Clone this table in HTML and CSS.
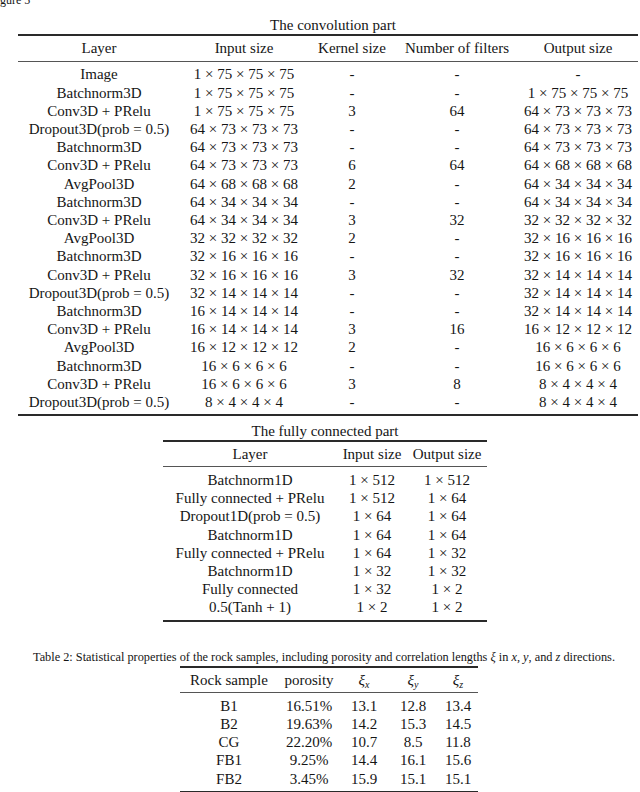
FILE: index.html
```html
<!DOCTYPE html>
<html>
<head>
<meta charset="utf-8">
<link rel="stylesheet" href="styles.css">
</head>
<body>
<div class="fig">gure 5</div>

<section class="tbl conv">
  <div class="title">The convolution part</div>
  <div class="rule thick"></div>
  <div class="head">
    <div class="row"><span>Layer</span><span>Input size</span><span>Kernel size</span><span>Number of filters</span><span>Output size</span></div>
  </div>
  <div class="rule thin"></div>
  <div class="body">
    <div class="row"><span>Image</span><span>1 × 75 × 75 × 75</span><span>-</span><span>-</span><span>-</span></div>
    <div class="row"><span>Batchnorm3D</span><span>1 × 75 × 75 × 75</span><span>-</span><span>-</span><span>1 × 75 × 75 × 75</span></div>
    <div class="row"><span>Conv3D + PRelu</span><span>1 × 75 × 75 × 75</span><span>3</span><span>64</span><span>64 × 73 × 73 × 73</span></div>
    <div class="row"><span>Dropout3D(prob = 0.5)</span><span>64 × 73 × 73 × 73</span><span>-</span><span>-</span><span>64 × 73 × 73 × 73</span></div>
    <div class="row"><span>Batchnorm3D</span><span>64 × 73 × 73 × 73</span><span>-</span><span>-</span><span>64 × 73 × 73 × 73</span></div>
    <div class="row"><span>Conv3D + PRelu</span><span>64 × 73 × 73 × 73</span><span>6</span><span>64</span><span>64 × 68 × 68 × 68</span></div>
    <div class="row"><span>AvgPool3D</span><span>64 × 68 × 68 × 68</span><span>2</span><span>-</span><span>64 × 34 × 34 × 34</span></div>
    <div class="row"><span>Batchnorm3D</span><span>64 × 34 × 34 × 34</span><span>-</span><span>-</span><span>64 × 34 × 34 × 34</span></div>
    <div class="row"><span>Conv3D + PRelu</span><span>64 × 34 × 34 × 34</span><span>3</span><span>32</span><span>32 × 32 × 32 × 32</span></div>
    <div class="row"><span>AvgPool3D</span><span>32 × 32 × 32 × 32</span><span>2</span><span>-</span><span>32 × 16 × 16 × 16</span></div>
    <div class="row"><span>Batchnorm3D</span><span>32 × 16 × 16 × 16</span><span>-</span><span>-</span><span>32 × 16 × 16 × 16</span></div>
    <div class="row"><span>Conv3D + PRelu</span><span>32 × 16 × 16 × 16</span><span>3</span><span>32</span><span>32 × 14 × 14 × 14</span></div>
    <div class="row"><span>Dropout3D(prob = 0.5)</span><span>32 × 14 × 14 × 14</span><span>-</span><span>-</span><span>32 × 14 × 14 × 14</span></div>
    <div class="row"><span>Batchnorm3D</span><span>16 × 14 × 14 × 14</span><span>-</span><span>-</span><span>32 × 14 × 14 × 14</span></div>
    <div class="row"><span>Conv3D + PRelu</span><span>16 × 14 × 14 × 14</span><span>3</span><span>16</span><span>16 × 12 × 12 × 12</span></div>
    <div class="row"><span>AvgPool3D</span><span>16 × 12 × 12 × 12</span><span>2</span><span>-</span><span>16 × 6 × 6 × 6</span></div>
    <div class="row"><span>Batchnorm3D</span><span>16 × 6 × 6 × 6</span><span>-</span><span>-</span><span>16 × 6 × 6 × 6</span></div>
    <div class="row"><span>Conv3D + PRelu</span><span>16 × 6 × 6 × 6</span><span>3</span><span>8</span><span>8 × 4 × 4 × 4</span></div>
    <div class="row"><span>Dropout3D(prob = 0.5)</span><span>8 × 4 × 4 × 4</span><span>-</span><span>-</span><span>8 × 4 × 4 × 4</span></div>
  </div>
  <div class="rule thick"></div>
</section>

<section class="tbl fc">
  <div class="title">The fully connected part</div>
  <div class="rule thick"></div>
  <div class="head">
    <div class="row"><span>Layer</span><span>Input size</span><span>Output size</span></div>
  </div>
  <div class="rule thin"></div>
  <div class="body">
    <div class="row"><span>Batchnorm1D</span><span>1 × 512</span><span>1 × 512</span></div>
    <div class="row"><span>Fully connected + PRelu</span><span>1 × 512</span><span>1 × 64</span></div>
    <div class="row"><span>Dropout1D(prob = 0.5)</span><span>1 × 64</span><span>1 × 64</span></div>
    <div class="row"><span>Batchnorm1D</span><span>1 × 64</span><span>1 × 64</span></div>
    <div class="row"><span>Fully connected + PRelu</span><span>1 × 64</span><span>1 × 32</span></div>
    <div class="row"><span>Batchnorm1D</span><span>1 × 32</span><span>1 × 32</span></div>
    <div class="row"><span>Fully connected</span><span>1 × 32</span><span>1 × 2</span></div>
    <div class="row"><span>0.5(Tanh + 1)</span><span>1 × 2</span><span>1 × 2</span></div>
  </div>
  <div class="rule thick"></div>
</section>

<p class="caption">Table 2: Statistical properties of the rock samples, including porosity and correlation lengths <i>ξ</i> in <i>x</i>, <i>y</i>, and <i>z</i> directions.</p>

<section class="tbl rock">
  <div class="rule thick"></div>
  <div class="head">
    <div class="row"><span>Rock sample</span><span>porosity</span><span><i>ξ</i><sub><i>x</i></sub></span><span><i>ξ</i><sub><i>y</i></sub></span><span><i>ξ</i><sub><i>z</i></sub></span></div>
  </div>
  <div class="rule thin"></div>
  <div class="body">
    <div class="row"><span>B1</span><span>16.51%</span><span>13.1</span><span>12.8</span><span>13.4</span></div>
    <div class="row"><span>B2</span><span>19.63%</span><span>14.2</span><span>15.3</span><span>14.5</span></div>
    <div class="row"><span>CG</span><span>22.20%</span><span>10.7</span><span>8.5</span><span>11.8</span></div>
    <div class="row"><span>FB1</span><span>9.25%</span><span>14.4</span><span>16.1</span><span>15.6</span></div>
    <div class="row"><span>FB2</span><span>3.45%</span><span>15.9</span><span>15.1</span><span>15.1</span></div>
  </div>
  <div class="rule thick"></div>
</section>
</body>
</html>
```

FILE: styles.css
```css
html, body {
  margin: 0;
  padding: 0;
  background: #ffffff;
}
body {
  width: 640px;
  height: 792px;
  overflow: hidden;
  font-family: "Liberation Serif", "Times New Roman", serif;
  color: #151515;
  font-size: 15px;
  line-height: 18.2px;
}
.fig {
  font-size: 12px;
  line-height: 12px;
  height: 10px;
  margin-top: -6px;
  margin-bottom: 11.9px;
}
.tbl {
  display: flex;
  flex-direction: column;
}
.title {
  text-align: center;
  white-space: nowrap;
}
.rule {
  background: #2a2a2a;
}
.rule.thick { height: 2px; }
.rule.thin { height: 1px; background: #555; }
.head { padding: 3px 0 3.5px; }
.body { padding: 3.5px 0 3px; }
.row {
  display: grid;
  grid-template-columns: var(--cols);
}
.row > span {
  justify-self: center;
  white-space: nowrap;
}
.conv {
  margin-left: 18px;
  width: 620px;
  --cols: 162px 128px 88px 122px 120px;
}
.conv .title { padding-left: 10px; }
.fc {
  margin-top: 5.4px;
  margin-left: 163px;
  width: 324px;
  --cols: 174px 70px 80px;
}
.caption {
  margin: 0;
  margin-top: 28px;
  padding-left: 33px;
  font-size: 12.3px;
  line-height: 14px;
  height: 14px;
  white-space: nowrap;
}
.rock {
  margin-top: 2px;
  margin-left: 180px;
  width: 298px;
  --cols: 98px 62px 48px 50px 40px;
}
sub {
  font-size: 10px;
  line-height: 0;
  vertical-align: -3px;
}
```
